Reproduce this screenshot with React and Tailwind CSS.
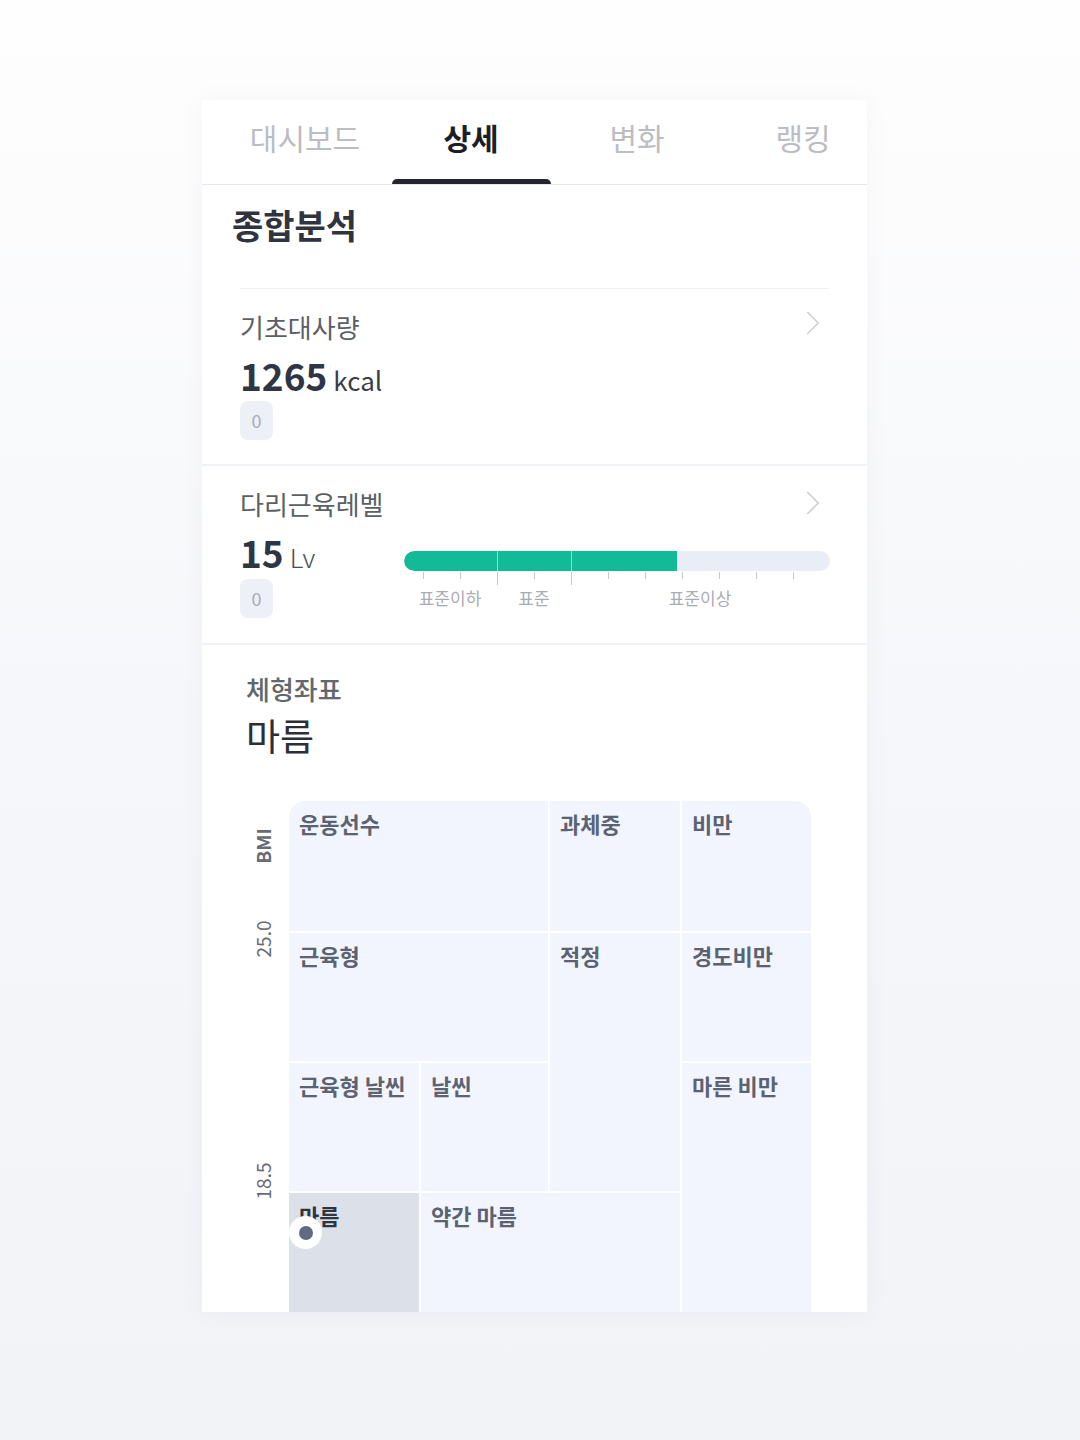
import React from 'react';
import { ChevronRight } from 'lucide-react';

const tabs = ['대시보드', '상세', '변화', '랭킹'];

const Badge = () => (
  <div className="w-[33px] h-[39px] rounded-lg bg-[#eef0f8] flex items-center justify-center text-[18px] text-[#a7abb8]">
    0
  </div>
);

const LevelBar = () => {
  const ticks = Array.from({ length: 11 }, (_, i) => 19 + i * 37);
  return (
    <div className="relative w-[426px] pt-[19px]">
      <div className="relative h-[20px] rounded-full bg-[#e9edf6] overflow-hidden">
        <div className="absolute left-0 top-0 h-full bg-[#12ba98] rounded-l-full" style={{ width: 273 }} />
        <div className="absolute top-0 h-full w-px bg-white/50" style={{ left: 93 }} />
        <div className="absolute top-0 h-full w-px bg-white/50" style={{ left: 167 }} />
      </div>
      <svg width="426" height="16" className="block">
        {ticks.map((x) => (
          <line
            key={x}
            x1={x + 0.5}
            x2={x + 0.5}
            y1="1"
            y2={x === 93 || x === 167 ? 14 : 8}
            stroke="#c4c8d0"
            strokeWidth="1"
          />
        ))}
      </svg>
      <div className="relative h-[22px] text-[17px] leading-[22px] text-[#a9acb4]">
        <span className="absolute -translate-x-1/2 whitespace-nowrap" style={{ left: 46 }}>표준이하</span>
        <span className="absolute -translate-x-1/2 whitespace-nowrap" style={{ left: 130 }}>표준</span>
        <span className="absolute -translate-x-1/2 whitespace-nowrap" style={{ left: 296 }}>표준이상</span>
      </div>
    </div>
  );
};

const Cell = ({ label, className = '', active = false }) => (
  <div className={`${active ? 'bg-[#dce0e9]' : 'bg-[#f2f5fd]'} px-[10px] pt-[8px] ${className}`}>
    <span className={`text-[22px] leading-[28px] font-bold whitespace-nowrap ${active ? 'text-[#2f343e]' : 'text-[#5b6372]'}`}>{label}</span>
  </div>
);

const BodyGrid = () => (
  <div className="flex pl-[48px] gap-[14px]">
    <div className="relative w-[25px] h-[512px] text-[19px] text-[#676b73]">
      <span className="absolute left-1/2 top-[45px] -translate-x-1/2 -translate-y-1/2 -rotate-90 font-bold whitespace-nowrap">BMI</span>
      <span className="absolute left-1/2 top-[138px] -translate-x-1/2 -translate-y-1/2 -rotate-90 whitespace-nowrap">25.0</span>
      <span className="absolute left-1/2 top-[380px] -translate-x-1/2 -translate-y-1/2 -rotate-90 whitespace-nowrap">18.5</span>
    </div>
    <div className="relative w-[522px]">
      <div className="grid grid-cols-[130px_127px_130px_129px] grid-rows-[130px_128px_128px_130px] gap-[2px] bg-white rounded-t-2xl overflow-hidden">
        <Cell label="운동선수" className="col-span-2" />
        <Cell label="과체중" />
        <Cell label="비만" />
        <Cell label="근육형" className="col-span-2" />
        <Cell label="적정" className="row-span-2" />
        <Cell label="경도비만" />
        <Cell label="근육형 날씬" />
        <Cell label="날씬" />
        <Cell label="마른 비만" className="row-span-2" />
        <Cell label="마름" active />
        <Cell label="약간 마름" className="col-span-2" />
      </div>
      <div className="absolute left-0 top-[415px] w-[33px] h-[33px] rounded-full bg-white flex items-center justify-center">
        <div className="w-[14px] h-[14px] rounded-full bg-[#5f6b80]" />
      </div>
    </div>
  </div>
);

export default function App() {
  return (
    <div
      className="min-h-screen w-full bg-gradient-to-b from-[#fefefe] via-[#f6f7fa] to-[#f1f3f7] pt-[100px]"
      style={{ fontFamily: '"Noto Sans CJK KR", "Noto Sans", sans-serif' }}
    >
      <div className="ml-[202px] w-[665px] h-[1212px] bg-white overflow-hidden shadow-[0_0_24px_rgba(30,40,70,0.04)]">
        {/* Tabs */}
        <div className="flex h-[85px] border-b border-[#e6e7eb] pl-[20px]">
          {tabs.map((t, i) => (
            <div key={t} className="relative w-[166px] shrink-0 flex justify-center pt-[19px]">
              <span
                className={`text-[30px] leading-[36px] ${
                  i === 1 ? 'font-bold text-[#1b1e25]' : 'text-[#bcbdc2]'
                }`}
              >
                {t}
              </span>
              {i === 1 && (
                <div className="absolute bottom-0 left-[4px] w-[159px] h-[5px] rounded-t-md bg-[#23262e]" />
              )}
            </div>
          ))}
        </div>

        {/* Title */}
        <div className="pl-[30px] pt-[18px] h-[103px]">
          <h2 className="text-[34px] leading-[44px] font-bold text-[#30343f]">종합분석</h2>
        </div>
        <div className="mx-[38px] h-px bg-[#eef0f3]" />

        {/* 기초대사량 */}
        <div className="relative pl-[38px] pt-[22px] pb-[24px] h-[175px]">
          <ChevronRight className="absolute right-[33px] top-[13px] w-[42px] h-[42px] text-[#cfd0d4]" strokeWidth={1} />
          <div className="text-[26px] leading-[32px] text-[#5c5f66]">기초대사량</div>
          <div className="mt-[12px] flex items-baseline h-[40px]">
            <span className="text-[37px] leading-[40px] font-bold text-[#2f3545]">1265</span>
            <span className="ml-[6px] text-[26px] leading-[40px] text-[#3b3e45]">kcal</span>
          </div>
          <div className="mt-[6px]">
            <Badge />
          </div>
        </div>
        <div className="h-[2px] bg-[#f1f2f5]" />

        {/* 다리근육레벨 */}
        <div className="relative pl-[38px] pt-[22px] h-[177px]">
          <ChevronRight className="absolute right-[33px] top-[16px] w-[42px] h-[42px] text-[#cfd0d4]" strokeWidth={1} />
          <div className="text-[26px] leading-[32px] text-[#5c5f66]">다리근육레벨</div>
          <div className="mt-[12px] flex">
            <div className="w-[164px]">
              <div className="flex items-baseline h-[40px]">
                <span className="text-[37px] leading-[40px] font-bold text-[#2f3545]">15</span>
                <span className="ml-[6px] text-[26px] leading-[40px] text-[#4a4d55] font-light">Lv</span>
              </div>
              <div className="mt-[7px]">
                <Badge />
              </div>
            </div>
            <LevelBar />
          </div>
        </div>
        <div className="h-[2px] bg-[#f1f2f5]" />

        {/* 체형좌표 */}
        <div className="pt-[28px]">
          <div className="pl-[44px]">
            <div className="text-[26px] leading-[32px] font-medium text-[#62666e]">체형좌표</div>
            <div className="mt-[8px] text-[37px] leading-[44px] text-[#2c2f36]">마름</div>
          </div>
          <div className="mt-[44px]">
            <BodyGrid />
          </div>
        </div>
      </div>
    </div>
  );
}
